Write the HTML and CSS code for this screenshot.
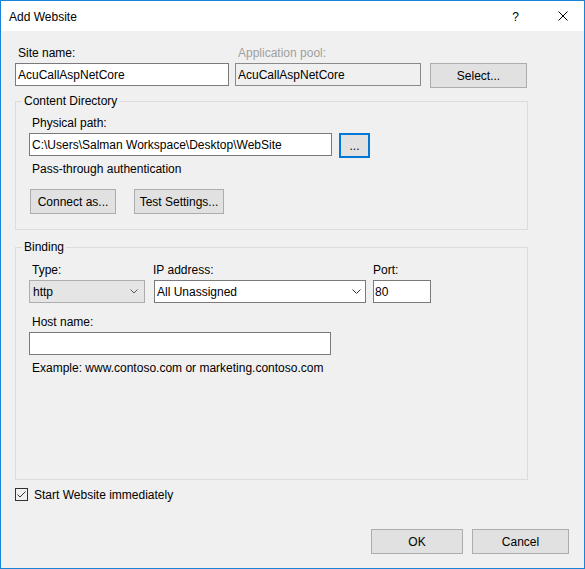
FILE: index.html
```html
<!DOCTYPE html>
<html lang="en">
<head>
  <meta charset="UTF-8" />
  <title>Add Website</title>
  <link rel="stylesheet" href="styles.css">
</head>
<body>

  <div class="window">
    <div class="titlebar">
      <span class="title">Add Website</span>
      <span class="help">?</span>
      <svg class="close" width="10" height="10" viewBox="0 0 10 10">
        <path d="M0.5 0.5 L9.5 9.5 M9.5 0.5 L0.5 9.5" stroke="#000" stroke-width="1" fill="none" />
      </svg>
    </div>

    <div class="content">
      <div class="site-row">
        <div class="field">
          <label for="siteName">Site name:</label>
          <input type="text" id="siteName" class="site-input" value="AcuCallAspNetCore" />
        </div>
        <div class="field pool-field">
          <label class="disabled" for="appPool">Application pool:</label>
          <input type="text" id="appPool" class="pool-input" value="AcuCallAspNetCore" readonly />
        </div>
        <button class="btn select-btn">Select...</button>
      </div>

      <fieldset class="group content-dir">
        <legend>Content Directory</legend>
        <label class="indent" for="physPath">Physical path:</label>
        <div class="path-row">
          <input type="text" id="physPath" class="path-input" value="C:\Users\Salman Workspace\Desktop\WebSite" />
          <button class="btn browse-btn">...</button>
        </div>
        <div class="note">Pass-through authentication</div>
        <div class="auth-row">
          <button class="btn connect-btn">Connect as...</button>
          <button class="btn test-btn">Test Settings...</button>
        </div>
      </fieldset>

      <fieldset class="group binding">
        <legend>Binding</legend>
        <div class="binding-row">
          <div class="field">
            <label class="indent">Type:</label>
            <div class="combo combo-type">
              <span>http</span>
              <svg width="8" height="5" viewBox="0 0 8 5"><path d="M0.5 0.5 L4 4 L7.5 0.5" stroke="#555" fill="none" /></svg>
            </div>
          </div>
          <div class="field ip-field">
            <label class="ip-label">IP address:</label>
            <div class="combo combo-ip">
              <span>All Unassigned</span>
              <svg width="9" height="5" viewBox="0 0 9 5"><path d="M0.5 0.5 L4.5 4.5 L8.5 0.5" stroke="#333" fill="none" /></svg>
            </div>
          </div>
          <div class="field port-field">
            <label class="port-label" for="port">Port:</label>
            <input type="text" id="port" class="port-input" value="80" />
          </div>
        </div>

        <label class="indent host-label" for="host">Host name:</label>
        <input type="text" id="host" class="host-input" value="" />
        <div class="note example">Example: www.contoso.com or marketing.contoso.com</div>
      </fieldset>

      <div class="check-row">
        <svg width="13" height="13" viewBox="0 0 13 13">
          <rect x="0.5" y="0.5" width="12" height="12" fill="#f0f0f0" stroke="#333" />
          <path d="M2.5 6.5 L5 9 L10.5 3.5" stroke="#333" stroke-width="1" fill="none" />
        </svg>
        <span>Start Website immediately</span>
      </div>

      <div class="footer">
        <button class="btn ok-btn">OK</button>
        <button class="btn cancel-btn">Cancel</button>
      </div>
    </div>
  </div>

</body>
</html>
```

FILE: styles.css
```css
* {
  box-sizing: border-box;
}

body {
  margin: 0;
  font-family: "Liberation Sans", Arial, sans-serif;
  font-size: 12px;
  color: #000;
}

.window {
  width: 585px;
  height: 569px;
  border: 1px solid #1883d7;
  background: #f0f0f0;
  display: flex;
  flex-direction: column;
}

.titlebar {
  height: 30px;
  background: #fff;
  display: flex;
  align-items: center;
  padding: 1px 16px 0 8px;
}

.title {
  flex: 1;
}

.help {
  margin-right: 39px;
}

.close {
  display: block;
  margin-top: -1px;
}

.content {
  flex: 1;
  display: flex;
  flex-direction: column;
  padding-left: 14px;
}

label, legend, .note {
  display: block;
  line-height: 15px;
}

.field label {
  margin-bottom: 2px;
  padding: 1px 0 0 3px;
}

.disabled {
  color: #a0a0a0;
}

input {
  height: 23px;
  border: 1px solid #7a7a7a;
  padding: 0 2px;
  font: inherit;
  color: #000;
  background: #fff;
  outline: none;
}

.btn {
  height: 25px;
  border: 1px solid #adadad;
  background: #e1e1e1;
  font: inherit;
  color: #000;
  padding: 0;
}

/* top row */
.site-row {
  display: flex;
  margin-top: 14px;
}

.site-input {
  width: 214px;
}

.pool-field {
  margin-left: 6px;
}

.pool-input {
  width: 186px;
  background: #f0f0f0;
  border-color: #8a8a8a;
}

.select-btn {
  width: 97px;
  margin: 18px 0 0 9px;
}

/* group boxes */
.group {
  width: 513px;
  margin: 0;
  border: 1px solid #dcdcdc;
  padding: 0 0 0 13px;
  min-width: 0;
}

.group legend {
  padding: 1px 2px 0;
  margin-left: -7px;
}

.content-dir {
  margin-top: 5px;
  padding-top: 6px;
  padding-bottom: 15px;
}

.indent {
  padding: 1px 0 0 3px;
  margin-bottom: 2px;
}

.path-row {
  display: flex;
  align-items: flex-start;
}

.path-input {
  width: 303px;
}

.browse-btn {
  width: 31px;
  margin-left: 7px;
  border: 2px solid #0078d7;
  line-height: 14px;
}

.note {
  padding-left: 3px;
}

.content-dir .note {
  margin-top: 4px;
}

.auth-row {
  display: flex;
  margin-top: 12px;
}

.connect-btn {
  width: 86px;
  margin-left: 1px;
}

.test-btn {
  width: 90px;
  margin-left: 18px;
}

.binding {
  margin-top: 9px;
  padding-top: 7px;
  padding-bottom: 103px;
}

.binding-row {
  display: flex;
}

.combo {
  height: 23px;
  display: flex;
  align-items: center;
  justify-content: space-between;
  border: 1px solid #7a7a7a;
  background: #fff;
}

.combo-type {
  width: 116px;
  padding: 0 6px 0 3px;
  background: #e5e5e5;
  border-color: #adadad;
}

.combo-ip {
  width: 212px;
  padding: 0 4px 0 2px;
}

.ip-field {
  margin-left: 9px;
}

.field .ip-label {
  padding-left: 0;
  margin-left: -1px;
}

.port-field {
  margin-left: 7px;
}

.field .port-label {
  padding-left: 0;
}

.port-input {
  width: 58px;
  padding-left: 1px;
}

.host-label {
  margin-top: 11px;
}

.host-input {
  width: 302px;
  display: block;
}

.example {
  margin-top: 6px;
}

/* bottom */
.check-row {
  display: flex;
  align-items: center;
  margin-top: 8px;
  height: 13px;
}

.check-row svg {
  display: block;
}

.check-row span {
  margin-left: 6px;
}

.footer {
  display: flex;
  justify-content: flex-end;
  margin-top: 28px;
  padding-right: 15px;
}

.ok-btn {
  width: 92px;
}

.cancel-btn {
  width: 97px;
  margin-left: 9px;
}
```
